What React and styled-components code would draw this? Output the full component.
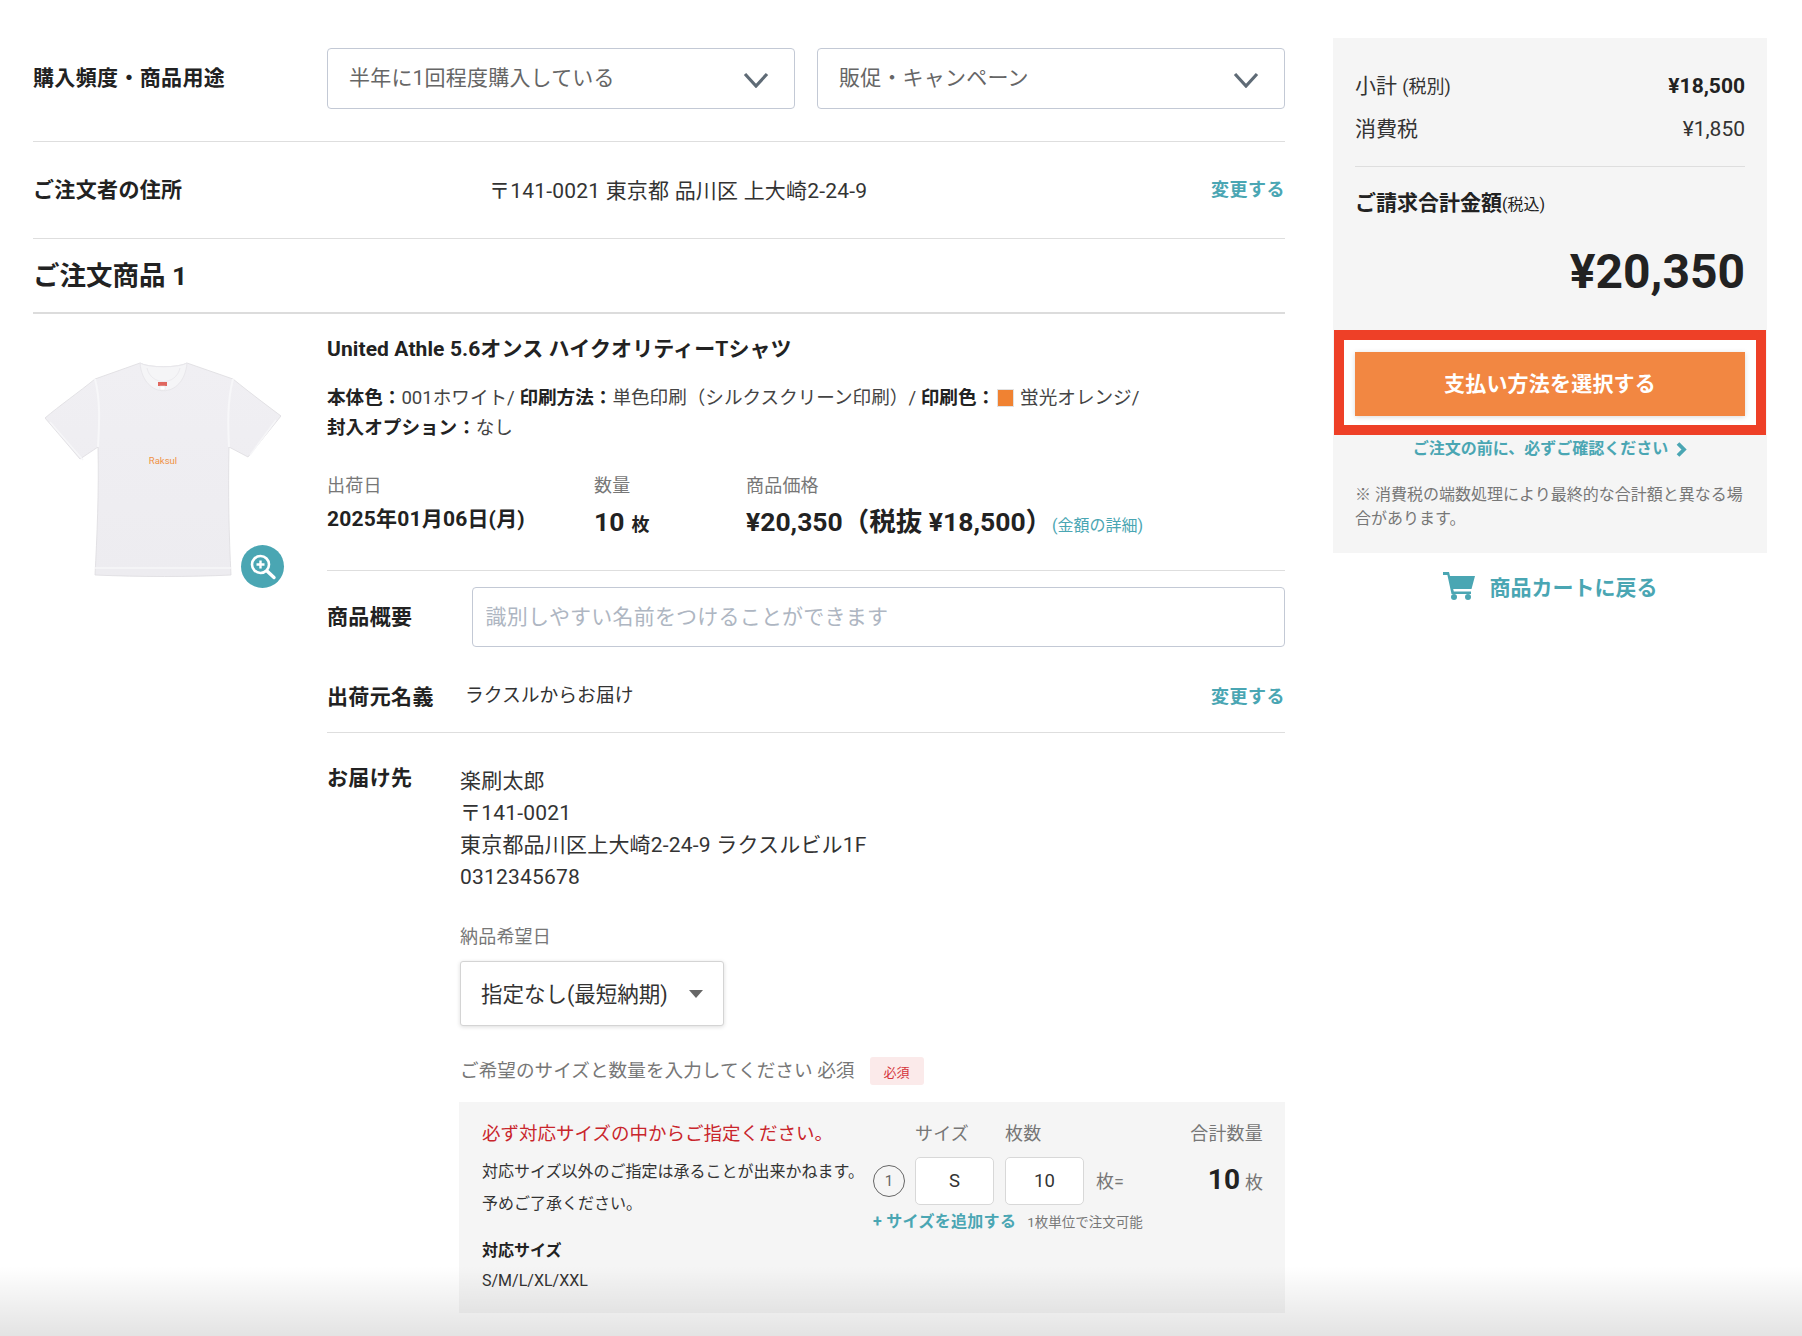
import React from "react";
import styled, { createGlobalStyle } from "styled-components";

const teal = "#4aa6b3";

const GlobalStyle = createGlobalStyle`
  html, body {
    margin: 0;
    padding: 0;
    background: #fff;
  }
  body {
    font-family: Roboto, "Noto Sans CJK JP", sans-serif;
    color: #333;
  }
  * {
    box-sizing: border-box;
  }
`;

// Page layout
const Page = styled.div`
  position: relative;
  display: flex;
  align-items: flex-start;
  gap: 48px;
  width: 1802px;
  height: 1336px;
  padding-left: 33px;
  overflow: hidden;
`;

const BottomFade = styled.div`
  position: absolute;
  left: 0;
  right: 0;
  bottom: 0;
  height: 70px;
  background: linear-gradient(rgba(0, 0, 0, 0), rgba(0, 0, 0, 0.11));
  pointer-events: none;
`;

const Main = styled.main`
  width: 1252px;
  padding-top: 48px;
`;

const Side = styled.aside`
  width: 434px;
  margin-top: 38px;
`;

// Top rows
const FrequencyRow = styled.div`
  display: flex;
  align-items: center;
  padding-bottom: 32px;
  border-bottom: 1px solid #dedede;
`;

const RowTitle = styled.div`
  flex: none;
  width: ${(p) => p.$width || 294}px;
  padding-bottom: ${(p) => p.$lift || 0}px;
  font-size: 21px;
  line-height: 30px;
  letter-spacing: 0.35px;
  font-weight: 700;
  color: #222;
  white-space: nowrap;
`;

const Selects = styled.div`
  flex: 1;
  display: flex;
  gap: 22px;
`;

const SelectBox = styled.div`
  flex: 1;
  height: 61px;
  display: flex;
  align-items: center;
  justify-content: space-between;
  padding: 0 25px 5px 21px;
  border: 1px solid #c3c9d5;
  border-radius: 4px;
  font-size: 21px;
  letter-spacing: 0.2px;
  color: #666;
  white-space: nowrap;
`;

const Chevron = styled.svg`
  width: 26px;
  height: 16px;
  margin-top: 7px;
`;

const OrdererRow = styled.div`
  height: 97px;
  display: flex;
  align-items: center;
  border-bottom: 1px solid #dedede;
`;

const OrdererAddress = styled.div`
  flex: 1;
  padding-bottom: 3px;
  font-size: 21px;
  letter-spacing: 0.2px;
  color: #333;
`;

const ChangeLink = styled.a`
  flex: none;
  margin-top: ${(p) => p.$top || 0}px;
  font-size: 18px;
  line-height: 26px;
  letter-spacing: 0.5px;
  font-weight: 700;
  color: ${teal};
  white-space: nowrap;
`;

const ItemHeading = styled.h2`
  height: 75px;
  margin: 0;
  font-size: 26.5px;
  line-height: 74px;
  font-weight: 700;
  color: #222;
  border-bottom: 2px solid #dcdcdc;
`;

// Product
const Product = styled.section`
  display: flex;
`;

const ImageColumn = styled.div`
  flex: none;
  width: 294px;
  padding: 48px 0 0 12px;
`;

const ImageWrap = styled.div`
  position: relative;
  width: 236px;
  height: 216px;
`;

const Tee = styled.svg`
  display: block;
  width: 236px;
  height: 216px;
`;

const ZoomBadge = styled.div`
  position: absolute;
  right: -3px;
  bottom: -10px;
  width: 43px;
  height: 43px;
  border-radius: 50%;
  background: ${teal};
`;

const Details = styled.div`
  flex: 1;
  min-width: 0;
`;

const ProductName = styled.h3`
  margin: 21px 0 0;
  font-size: 21px;
  line-height: 28px;
  letter-spacing: 0.1px;
  font-weight: 700;
  color: #222;
`;

const Specs = styled.div`
  margin-top: 20px;
  font-size: 18.6px;
  line-height: 30px;
  color: #444;
  white-space: nowrap;
`;

const SpecKey = styled.b`
  font-weight: 700;
  color: #222;
`;

const Swatch = styled.span`
  display: inline-block;
  width: 17px;
  height: 18px;
  margin: 0 6px 0 2px;
  vertical-align: -3px;
  background: #f08232;
  border: 1px solid #e2e2e2;
`;

const MetaRow = styled.div`
  display: grid;
  grid-template-columns: 267px 152px 1fr;
  margin-top: 30px;
  padding-bottom: 26px;
  border-bottom: 1px solid #dedede;
`;

const MetaLabel = styled.div`
  font-size: 18px;
  line-height: 26px;
  letter-spacing: 0.2px;
  color: #777;
`;

const MetaValue = styled.div`
  margin-top: ${(p) => (p.$small ? 2 : 5)}px;
  line-height: 36px;
  font-size: ${(p) => (p.$small ? 21 : 26.5)}px;
  letter-spacing: ${(p) => (p.$small ? 0.2 : 0)}px;
  font-weight: 700;
  color: #222;
  white-space: nowrap;
`;

const Unit = styled.span`
  margin-left: 7px;
  font-size: 18px;
`;

const PriceDetail = styled.a`
  font-size: 16px;
  font-weight: 400;
  color: ${teal};
`;

const SummaryRow = styled.div`
  display: flex;
  align-items: center;
  padding-top: 16px;
`;

const SummaryInput = styled.input`
  flex: 1;
  min-width: 0;
  height: 60px;
  padding: 0 13px;
  border: 1px solid #c3c9d5;
  border-radius: 4px;
  font: inherit;
  font-size: 21px;
  letter-spacing: 0.2px;
  color: #333;
  &::placeholder {
    color: #aeb6c2;
    opacity: 1;
  }
`;

const ShipperRow = styled.div`
  display: flex;
  align-items: flex-start;
  padding: 35px 0 20px;
  border-bottom: 1px solid #dedede;
`;

const ShipperName = styled.div`
  flex: 1;
  margin-top: 2px;
  font-size: 18.8px;
  line-height: 24px;
  color: #333;
`;

const Delivery = styled.div`
  display: flex;
  align-items: flex-start;
  padding-top: 30px;
`;

const DeliveryBody = styled.div`
  flex: 1;
  min-width: 0;
`;

const AddressLines = styled.div`
  margin-top: 2px;
  font-size: 21px;
  line-height: 32px;
  letter-spacing: 0.2px;
  color: #333;
`;

const FieldLabel = styled.div`
  margin-top: 31px;
  font-size: 18px;
  line-height: 26px;
  letter-spacing: 0.2px;
  color: #777;
`;

const DateSelect = styled.div`
  width: 264px;
  height: 65px;
  margin-top: 11px;
  padding: 0 20px 2px 20px;
  display: flex;
  align-items: center;
  justify-content: space-between;
  background: #fff;
  border: 1px solid #d4d4d4;
  border-radius: 3px;
  box-shadow: 0 1px 4px rgba(0, 0, 0, 0.14);
  font-size: 21.5px;
  color: #333;
  white-space: nowrap;
`;

const Caret = styled.span`
  width: 0;
  height: 0;
  margin-top: 2px;
  border-left: 7px solid transparent;
  border-right: 7px solid transparent;
  border-top: 8px solid #666;
`;

const RequiredRow = styled.div`
  display: flex;
  align-items: center;
  gap: 15px;
  height: 34px;
  margin-top: 28px;
  font-size: 18.6px;
  letter-spacing: 0.05px;
  color: #777;
`;

const RequiredText = styled.span`
  padding-bottom: 5px;
`;

const RequiredBadge = styled.span`
  width: 54px;
  height: 28px;
  display: flex;
  align-items: center;
  justify-content: center;
  border-radius: 3px;
  background: #fbeaea;
  font-size: 13px;
  color: #d5343a;
`;

// Size and quantity box
const SizeBox = styled.div`
  display: grid;
  grid-template-columns: 391px 1fr;
  height: 211px;
  margin: 14px 0 0 -1px;
  padding: 18px 22px 0 23px;
  background: #f5f5f5;
`;

const SizeWarning = styled.div`
  font-size: 18.5px;
  line-height: 28px;
  color: #c9252c;
  white-space: nowrap;
`;

const SizeNote = styled.div`
  margin-top: 8px;
  font-size: 16px;
  line-height: 32px;
  color: #333;
  white-space: nowrap;
`;

const SizeListTitle = styled.div`
  margin-top: 18px;
  font-size: 16px;
  line-height: 26px;
  font-weight: 700;
  color: #222;
`;

const SizeList = styled.div`
  margin-top: 4px;
  font-size: 16px;
  line-height: 26px;
  color: #333;
`;

const QtyGrid = styled.div`
  display: grid;
  grid-template-columns: 42px 90px 91px 1fr auto;
  grid-template-rows: 28px 48px;
  row-gap: 9px;
  align-items: center;
`;

const QtyLabel = styled.div`
  font-size: 18px;
  line-height: 28px;
  letter-spacing: 0.2px;
  color: #777;
  white-space: nowrap;
  text-align: ${(p) => (p.$right ? "right" : "left")};
  grid-column: ${(p) => p.$col};
`;

const RowNumber = styled.div`
  width: 32px;
  height: 32px;
  display: flex;
  align-items: center;
  justify-content: center;
  border: 1px solid #666;
  border-radius: 50%;
  font-size: 15px;
  color: #666;
`;

const QtyInput = styled.input`
  width: 79px;
  height: 48px;
  border: 1px solid #d8d8d8;
  border-radius: 5px;
  background: #fff;
  text-align: center;
  font: inherit;
  font-size: 18.5px;
  color: #333;
  outline: none;
`;

const Equals = styled.div`
  padding-bottom: 2px;
  font-size: 18px;
  color: #777;
`;

const QtyTotal = styled.div`
  justify-self: end;
  padding-bottom: 3px;
  font-size: 28px;
  font-weight: 700;
  color: #222;
  white-space: nowrap;
`;

const TotalUnit = styled.span`
  margin-left: 5px;
  font-size: 18px;
  font-weight: 400;
  color: #777;
`;

const AddRow = styled.div`
  display: flex;
  align-items: center;
  gap: 11px;
  margin-top: 6px;
  line-height: 22px;
  white-space: nowrap;
`;

const AddLink = styled.a`
  font-size: 16px;
  letter-spacing: 0.3px;
  font-weight: 700;
  color: ${teal};
`;

const AddHint = styled.span`
  font-size: 13.5px;
  color: #777;
`;

// Right panel
const Panel = styled.div`
  padding: 33px 22px 22px;
  background: #f5f5f5;
`;

const PriceRow = styled.div`
  display: flex;
  justify-content: space-between;
  margin-top: ${(p) => p.$top || 0}px;
  font-size: 21px;
  line-height: 30px;
  color: #333;
`;

const PriceStrong = styled.span`
  font-weight: 700;
  color: #222;
`;

const SmallTax = styled.span`
  font-size: 18px;
`;

const PanelRule = styled.hr`
  margin: 22px 0 0;
  border: 0;
  border-top: 1px solid #dedede;
`;

const TotalLabel = styled.div`
  margin-top: 21px;
  font-size: 21px;
  line-height: 30px;
  font-weight: 700;
  color: #222;
`;

const TotalTax = styled.span`
  font-size: 16px;
  font-weight: 400;
`;

const TotalAmount = styled.div`
  margin-top: 22px;
  font-size: 48px;
  line-height: 60px;
  font-weight: 700;
  color: #222;
  text-align: right;
`;

const Highlight = styled.div`
  margin: 28px -21px 0;
  padding: 12px 11px 9px;
  background: #fff;
  border: 10px solid #ee4027;
`;

const PayButton = styled.button`
  display: block;
  width: 100%;
  height: 64px;
  padding: 0 0 5px;
  border: 0;
  background: #f28742;
  box-shadow: 0 1px 5px rgba(0, 0, 0, 0.15);
  font: inherit;
  font-size: 21px;
  letter-spacing: 0.2px;
  font-weight: 700;
  color: #fff;
`;

const ConfirmLink = styled.a`
  display: flex;
  align-items: center;
  justify-content: center;
  gap: 8px;
  margin-top: 1px;
  font-size: 16px;
  line-height: 26px;
  font-weight: 700;
  color: ${teal};
`;

const Notice = styled.p`
  margin: 21px 0 0;
  font-size: 16px;
  line-height: 24px;
  color: #777;
`;

const BackLink = styled.a`
  display: flex;
  align-items: center;
  justify-content: center;
  gap: 15px;
  margin-top: 18px;
  height: 30px;
  font-size: 21px;
  font-weight: 700;
  color: ${teal};
`;

const ChevronDown = () => (
  <Chevron viewBox="0 0 26 16" fill="none" stroke="#5f6b76" strokeWidth="3.2">
    <path d="M2 2 L13 14 L24 2" />
  </Chevron>
);

const TeeShirt = () => (
  <Tee viewBox="0 0 236 216">
    <defs>
      <linearGradient id="cloth" x1="0" y1="0" x2="0" y2="1">
        <stop offset="0" stopColor="#f0eff3" />
        <stop offset="1" stopColor="#edecf0" />
      </linearGradient>
    </defs>
    <path
      d="M95 1 L50 17 C34 30 14 44 0 56 L35 97 L53 85 C54 130 52 175 50 213 C95 215 145 215 186 213 C184 175 183 130 184 85 L203 95 L236 54 C220 42 204 30 188 17 L142 1 C134 6 103 6 95 1 Z"
      fill="url(#cloth)"
      stroke="#dddce0"
      strokeWidth="0.8"
    />
    <path d="M95 1 C98 38 139 38 142 1 C134 6 103 6 95 1 Z" fill="#f5f5f7" stroke="#e8e7eb" />
    <path d="M102 6 C106 24 131 24 135 6" fill="none" stroke="#ebeaee" />
    <path d="M50 17 C56 40 54 65 53 85 M188 17 C182 40 183 65 184 85" fill="none" stroke="#f7f7f9" strokeWidth="2" />
    <path d="M5 60 L38 98 M231 58 L205 93 M50 206 L186 206" fill="none" stroke="#f6f6f8" strokeWidth="1.5" />
    <rect x="113" y="20" width="9" height="4" fill="#e0675f" />
    <rect x="115" y="24" width="5" height="4" fill="#fff" stroke="#e4e4e4" strokeWidth="0.5" />
    <text x="118" y="102" textAnchor="middle" fontSize="9.5" fontFamily="Roboto, sans-serif" fill="#f09245">
      Raksul
    </text>
  </Tee>
);

const App = () => {
  return (
    <Page>
      <GlobalStyle />
      <Main>
        <FrequencyRow>
          <RowTitle $lift={2}>購入頻度・商品用途</RowTitle>
          <Selects>
            <SelectBox>
              半年に1回程度購入している
              <ChevronDown />
            </SelectBox>
            <SelectBox>
              販促・キャンペーン
              <ChevronDown />
            </SelectBox>
          </Selects>
        </FrequencyRow>

        <OrdererRow>
          <RowTitle $width={456}>ご注文者の住所</RowTitle>
          <OrdererAddress>〒141-0021 東京都 品川区 上大崎2-24-9</OrdererAddress>
          <ChangeLink>変更する</ChangeLink>
        </OrdererRow>

        <ItemHeading>ご注文商品 1</ItemHeading>

        <Product>
          <ImageColumn>
            <ImageWrap>
              <TeeShirt />
              <ZoomBadge>
                <svg viewBox="0 0 43 43" width="43" height="43" fill="none" stroke="#fff">
                  <circle cx="19.5" cy="19.5" r="8.5" strokeWidth="2.6" />
                  <path d="M15.5 19.5 H23.5 M19.5 15.5 V23.5" strokeWidth="2.4" />
                  <path d="M26 26 L33 32.5" strokeWidth="3.4" strokeLinecap="round" />
                </svg>
              </ZoomBadge>
            </ImageWrap>
          </ImageColumn>

          <Details>
            <ProductName>United Athle 5.6オンス ハイクオリティーTシャツ</ProductName>
            <Specs>
              <SpecKey>本体色：</SpecKey>001ホワイト/ <SpecKey>印刷方法：</SpecKey>単色印刷（シルクスクリーン印刷）/{" "}
              <SpecKey>印刷色：</SpecKey>
              <Swatch />
              蛍光オレンジ/
              <br />
              <SpecKey>封入オプション：</SpecKey>なし
            </Specs>

            <MetaRow>
              <div>
                <MetaLabel>出荷日</MetaLabel>
                <MetaValue $small>2025年01月06日(月)</MetaValue>
              </div>
              <div>
                <MetaLabel>数量</MetaLabel>
                <MetaValue>
                  10<Unit>枚</Unit>
                </MetaValue>
              </div>
              <div>
                <MetaLabel>商品価格</MetaLabel>
                <MetaValue>
                  ¥20,350（税抜 ¥18,500）<PriceDetail>(金額の詳細)</PriceDetail>
                </MetaValue>
              </div>
            </MetaRow>

            <SummaryRow>
              <RowTitle $width={144.5}>商品概要</RowTitle>
              <SummaryInput placeholder="識別しやすい名前をつけることができます" />
            </SummaryRow>

            <ShipperRow>
              <RowTitle $width={138}>出荷元名義</RowTitle>
              <ShipperName>ラクスルからお届け</ShipperName>
              <ChangeLink $top={2}>変更する</ChangeLink>
            </ShipperRow>

            <Delivery>
              <RowTitle $width={133}>お届け先</RowTitle>
              <DeliveryBody>
                <AddressLines>
                  楽刷太郎
                  <br />〒141-0021
                  <br />
                  東京都品川区上大崎2-24-9 ラクスルビル1F
                  <br />
                  0312345678
                </AddressLines>

                <FieldLabel>納品希望日</FieldLabel>
                <DateSelect>
                  指定なし(最短納期)
                  <Caret />
                </DateSelect>

                <RequiredRow>
                  <RequiredText>ご希望のサイズと数量を入力してください 必須</RequiredText>
                  <RequiredBadge>必須</RequiredBadge>
                </RequiredRow>

                <SizeBox>
                  <div>
                    <SizeWarning>必ず対応サイズの中からご指定ください。</SizeWarning>
                    <SizeNote>
                      対応サイズ以外のご指定は承ることが出来かねます。
                      <br />
                      予めご了承ください。
                    </SizeNote>
                    <SizeListTitle>対応サイズ</SizeListTitle>
                    <SizeList>S/M/L/XL/XXL</SizeList>
                  </div>
                  <div>
                    <QtyGrid>
                      <QtyLabel $col="2">サイズ</QtyLabel>
                      <QtyLabel $col="3">枚数</QtyLabel>
                      <QtyLabel $col="5" $right>
                        合計数量
                      </QtyLabel>
                      <RowNumber>1</RowNumber>
                      <QtyInput readOnly value="S" />
                      <QtyInput readOnly value="10" />
                      <Equals>枚=</Equals>
                      <QtyTotal>
                        10<TotalUnit>枚</TotalUnit>
                      </QtyTotal>
                    </QtyGrid>
                    <AddRow>
                      <AddLink>+ サイズを追加する</AddLink>
                      <AddHint>1枚単位で注文可能</AddHint>
                    </AddRow>
                  </div>
                </SizeBox>
              </DeliveryBody>
            </Delivery>
          </Details>
        </Product>
      </Main>

      <Side>
        <Panel>
          <PriceRow>
            <span>
              小計 <SmallTax>(税別)</SmallTax>
            </span>
            <PriceStrong>¥18,500</PriceStrong>
          </PriceRow>
          <PriceRow $top={12}>
            <span>消費税</span>
            <span>¥1,850</span>
          </PriceRow>
          <PanelRule />
          <TotalLabel>
            ご請求合計金額<TotalTax>(税込)</TotalTax>
          </TotalLabel>
          <TotalAmount>¥20,350</TotalAmount>
          <Highlight>
            <PayButton>支払い方法を選択する</PayButton>
          </Highlight>
          <ConfirmLink>
            ご注文の前に、必ずご確認ください
            <svg width="11" height="15" viewBox="0 0 11 15" fill="none" stroke={teal} strokeWidth="3.8">
              <path d="M2 1.5 L8 7.5 L2 13.5" />
            </svg>
          </ConfirmLink>
          <Notice>※ 消費税の端数処理により最終的な合計額と異なる場合があります。</Notice>
        </Panel>
        <BackLink>
          <svg width="32" height="28" viewBox="0 0 32 28" fill={teal}>
            <path d="M0 0 H6 L7 4 H32 L28.5 17 H10.2 L10.8 19.5 H28 V22 H8.5 L4.4 3 H0 Z" />
            <circle cx="11" cy="25" r="3" />
            <circle cx="25" cy="25" r="3" />
          </svg>
          商品カートに戻る
        </BackLink>
      </Side>
      <BottomFade />
    </Page>
  );
};

export default App;
